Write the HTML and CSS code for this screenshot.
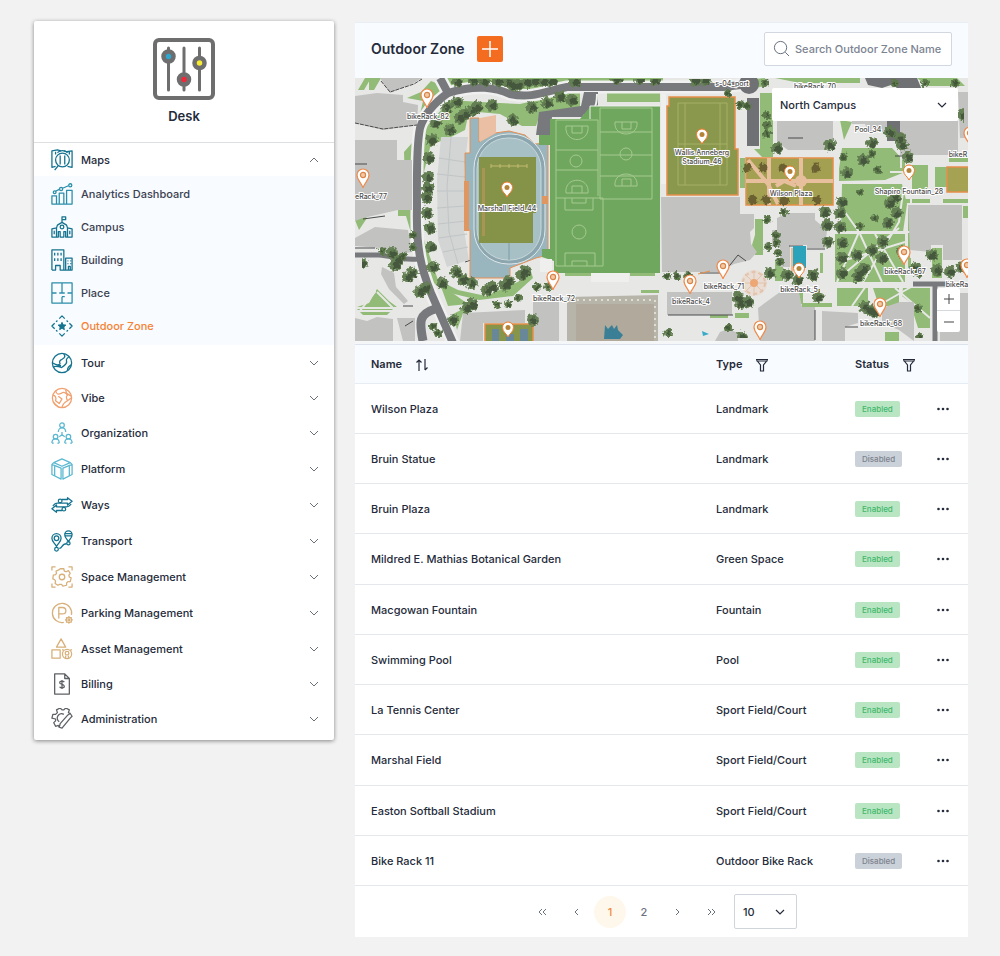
FILE: index.html
```html
<!DOCTYPE html>
<html lang="en">
<head>
    <meta charset="UTF-8">
    <meta name="viewport" content="width=device-width, initial-scale=1.0">
    <title>Desk - Outdoor Zone</title>
    <link rel="stylesheet" href="styles.css">
</head>
<body>
    <!-- Shared symbols -->
    <svg class="symbols" aria-hidden="true">
        <symbol id="down" viewBox="0 0 10 10"><path d="M1 3l4 4 4-4"/></symbol>
        <symbol id="filter" viewBox="0 0 14 14"><path d="M1 1.500h12M1.500 2l4 5v6h3V7l4-5M1.500 3h11"/></symbol>
        <symbol id="dots" viewBox="0 0 14 4"><circle cx="2.500" cy="2" r="1.300"/><circle cx="7" cy="2" r="1.300"/><circle cx="11.500" cy="2" r="1.300"/></symbol>
        <symbol id="pin" viewBox="0 0 14 22" overflow="visible">
            <path d="M7 20C6 15 1 12.500 1 7a6 6 0 0 1 12 0c0 5.500-5 8-6 13z" fill="#fff" stroke="#ef8a4c" stroke-width="1.200"/>
            <circle cx="7" cy="7" r="2.600" fill="#f3c9a5" stroke="#d98448" stroke-width="1.200"/>
        </symbol>
        <symbol id="zone-pin" viewBox="0 0 14 22" overflow="visible">
            <path d="M7 16C6 13 1.500 11 1.500 6.500a5.500 5.500 0 0 1 11 0C12.500 11 8 13 7 16z" fill="#fff" stroke="#ef7a2c" stroke-width="1"/>
            <circle cx="7" cy="6.500" r="2.500" fill="#b58338"/>
        </symbol>
    </svg>

    <div class="page">
        <!-- Sidebar -->
        <aside class="sidebar">
            <div class="brand">
                <svg class="brand-logo" viewBox="0 0 62 62" fill="none" stroke="#6e6e6e">
                    <rect x="2" y="2" width="58" height="58" rx="4" stroke-width="4"/>
                    <path d="M15.500 10v42M31 10v42M46.500 10v42" stroke-width="3" stroke-linecap="round"/>
                    <g stroke-width="4.500">
                        <circle cx="15.500" cy="18.500" r="5" fill="#2fa7cf"/>
                        <circle cx="31" cy="41.500" r="5" fill="#ee2a3a"/>
                        <circle cx="46.500" cy="25" r="5" fill="#f7ec31"/>
                    </g>
                </svg>
                <h1>Desk</h1>
            </div>

            <nav class="menu">
                <button type="button" class="menu-item menu-open">
                    <svg class="icon teal" viewBox="0 0 24 24"><path d="M5 19l-4 1V2l6-1 4 1M14 2l3 1 6-1v18l-5-1M5 3v3M20 3v3"/><circle cx="12.500" cy="12" r="7.500"/><path d="M8 18l-4 5M10 7v10M15 7v10M7 4c3-3 8-3 11 0"/></svg>
                    <span>Maps</span>
                    <svg class="chevron up"><use href="#down"/></svg>
                </button>
                <div class="submenu">
                    <a href="#" class="menu-item">
                        <svg class="icon teal2" viewBox="0 0 24 24"><path d="M1 14h5v9H1zM9 11h5v12H9zM17 8h6v15h-6zM5 9l4-2M12 6l7-3M1 23h22"/><circle cx="4" cy="10" r="1.500"/><circle cx="11" cy="6.500" r="1.700"/><circle cx="21" cy="2.500" r="1.700"/></svg>
                        <span>Analytics Dashboard</span>
                    </a>
                    <a href="#" class="menu-item">
                        <svg class="icon teal" viewBox="0 0 24 24"><path d="M12 7V1h4v3h-4M1 14l5-1 1-3 5-3 5 3 1 3 5 1v9h-7v-6h-2v6h-4v-6H8v6H1zM6 13v10M18 13v10M3.500 16v4M20.500 16v4"/><circle cx="12" cy="12" r="2"/></svg>
                        <span>Campus</span>
                    </a>
                    <a href="#" class="menu-item">
                        <svg class="icon teal" viewBox="0 0 24 24"><path d="M1 23V1h13v22M1 23h4v-5h5v5h13V10h-7v13M4 4v3M7.500 4v3M11 4v3M4 10v3M7.500 10v3M11 10v3M18 13h1M21 13h1M18 16h1M21 16h1M19 23v-4h2v4"/></svg>
                        <span>Building</span>
                    </a>
                    <a href="#" class="menu-item">
                        <svg class="icon teal2" viewBox="0 0 24 24"><path d="M1 1h22v22H1zM1 12h5M9 12h6M18 12h5M12 1v11M12 16v7M12 16h3"/></svg>
                        <span>Place</span>
                    </a>
                    <a href="#" class="menu-item active">
                        <svg class="icon teal" viewBox="0 0 24 24"><path d="M9 4l3-3 3 3M9 20l3 3 3-3M4 9l-3 3 3 3M20 9l3 3-3 3M5.500 7.500l1.500-1.500M17 6l1.500 1.500M5.500 16.500L7 18M17 18l1.500-1.500"/><path fill="#14738f" stroke-width="1" d="M12 8l1.200 2.700 3 .3-2.200 2 .6 3-2.600-1.500L9.400 16l.6-3-2.200-2 3-.3z"/></svg>
                        <span>Outdoor Zone</span>
                    </a>
                </div>
                <button type="button" class="menu-item">
                    <svg class="icon teal" viewBox="0 0 24 24"><circle cx="12" cy="12" r="10.500"/><path d="M14 2c2 3 1 4-2 6-3 1-3 3-2 5-2 2-5 1-8-1M3 16c3-1 6 0 9 1M20 5c-3 2-4 3-3 5 1 4-4 5-5 7M18 20c0-3 2-5 4-6M6 14l5 1"/></svg>
                    <span>Tour</span>
                    <svg class="chevron"><use href="#down"/></svg>
                </button>
                <button type="button" class="menu-item compact">
                    <svg class="icon orange" viewBox="0 0 24 24"><circle cx="12" cy="12" r="10.500"/><path d="M5 4c1 5 4 4 6 3 3-2 5-1 7 2-2 1-1 4 0 6-2 1-5 3-6 7M2 9c3 0 4 3 3 6l4 3 3-5-4-3M16 3l1 4 5 3M3 17l5 5M18 15l4-3"/></svg>
                    <span>Vibe</span>
                    <svg class="chevron"><use href="#down"/></svg>
                </button>
                <button type="button" class="menu-item">
                    <svg class="icon sky" viewBox="0 0 24 24"><circle cx="12" cy="3.500" r="2.500"/><circle cx="5" cy="16" r="2.500"/><circle cx="19" cy="16" r="2.500"/><path d="M8 11c0-6 8-6 8 0M1 23c0-6 8-6 8 0M15 23c0-6 8-6 8 0M12 11v3M12 14l-3 2M12 14l3 2M1 23h2M7 23h2M15 23h2M21 23h2"/></svg>
                    <span>Organization</span>
                    <svg class="chevron"><use href="#down"/></svg>
                </button>
                <button type="button" class="menu-item">
                    <svg class="icon sky" viewBox="0 0 24 24"><path d="M12 1l9 4-9 4-9-4zM1 7l10 4v12L1 18zM23 7l-10 4v12l10-5zM1 7l2-2M23 7l-2-2M4 9v10M20 9v10"/></svg>
                    <span>Platform</span>
                    <svg class="chevron"><use href="#down"/></svg>
                </button>
                <button type="button" class="menu-item">
                    <svg class="icon teal" viewBox="0 0 24 24"><circle cx="10" cy="7.500" r="2"/><circle cx="14" cy="16.500" r="2"/><path d="M12 6h6V4l5 4-5 4v-2H7c-3 0-4 2-5 3M12 18H6v2l-5-4 5-4v2h11c3 0 4-2 5-3"/></svg>
                    <span>Ways</span>
                    <svg class="chevron"><use href="#down"/></svg>
                </button>
                <button type="button" class="menu-item">
                    <svg class="icon teal" viewBox="0 0 24 24"><path d="M6 18c-2-4-5-5-5-9a5 5 0 0 1 10 0c0 4-3 5-5 9zM19 13c-1-3-4-4-4-8a4 4 0 0 1 8 0c0 4-3 5-4 8z"/><circle cx="6" cy="9" r="2.500"/><circle cx="6" cy="21" r="2"/><circle cx="19" cy="14.500" r="1.800"/><path d="M15 4h8M15 6.500h8M9 20c4 0 2-5 8-5"/></svg>
                    <span>Transport</span>
                    <svg class="chevron"><use href="#down"/></svg>
                </button>
                <button type="button" class="menu-item">
                    <svg class="icon tan" viewBox="0 0 24 24"><path d="M1 5V1h4M19 1h4v4M23 19v4h-4M5 23H1v-4M10 3h4l.5 2.500 2 .8L19 5l2 3-1.500 2 .5 2 2 1-1 4-2.500 0-1.500 1.500V21l-4 1-1.500-2-2 0L7.500 21 4.500 19 5 16.500 4 15l-2-1 .5-4L5 9.500 6 8l-.5-2.500L9 4z"/><circle cx="12" cy="12" r="3"/></svg>
                    <span>Space Management</span>
                    <svg class="chevron"><use href="#down"/></svg>
                </button>
                <button type="button" class="menu-item">
                    <svg class="icon tan" viewBox="0 0 24 24"><path d="M14 22.300A10.500 10.500 0 1 1 22.300 14M8.500 18V6h4c5 0 5 7 0 7h-4"/><circle cx="19.500" cy="19.500" r="1"/><path d="M19.500 16l1 1.200 1.600-.2v1.700l1 .8-1 1 0 1.500h-1.600l-1 1-1-1h-1.600l0-1.500-1-1 1-.8V17l1.600.2z"/></svg>
                    <span>Parking Management</span>
                    <svg class="chevron"><use href="#down"/></svg>
                </button>
                <button type="button" class="menu-item">
                    <svg class="icon tan" viewBox="0 0 24 24"><path d="M11 1l5 9H6zM1 13h9v9H1z"/><circle cx="17.500" cy="17.500" r="5"/><circle cx="17.500" cy="16.500" r="2"/><path d="M16 22v-3M19 22v-3M12 13h2M21 13h2"/></svg>
                    <span>Asset Management</span>
                    <svg class="chevron"><use href="#down"/></svg>
                </button>
                <button type="button" class="menu-item compact">
                    <svg class="icon gray" viewBox="0 0 24 24"><path d="M4 1h11l5 5v17H4zM15 1v5h5M14.500 10c-1-1.500-5-1.500-5 .5s5 1.500 5 4-4.500 2-5 .5M12 7.500v10"/></svg>
                    <span>Billing</span>
                    <svg class="chevron"><use href="#down"/></svg>
                </button>
                <button type="button" class="menu-item">
                    <svg class="icon gray" viewBox="0 0 24 24"><path d="M9 21l-1-2-3 1-2-4 2-2v-2l-4-1 1-4h3l2-2-1-3 4-2 2 2h2l2-2 4 2-1 3 2 1"/><path d="M12 22l9-11 2-2-2-3-3 2-8 9-1 4zM14 7a4.500 4.500 0 1 0-5 8"/></svg>
                    <span>Administration</span>
                    <svg class="chevron"><use href="#down"/></svg>
                </button>
            </nav>
        </aside>

        <!-- Main panel -->
        <main class="panel">
            <header class="panel-header">
                <h2>Outdoor Zone</h2>
                <button type="button" class="add-button" aria-label="Add zone">
                    <svg viewBox="0 0 26 26"><path d="M13 5v16M5 13h16"/></svg>
                </button>
                <label class="search">
                    <svg viewBox="0 0 18 18"><circle cx="8" cy="8" r="6.500"/><path d="M13 13l4 4"/></svg>
                    <input type="text" placeholder="Search Outdoor Zone Name" aria-label="Search Outdoor Zone Name">
                </label>
            </header>

            <div class="map">
                <svg class="map-canvas" viewBox="0 0 613 263" preserveAspectRatio="xMidYMid slice">
                    <defs>
                        <filter id="leaf" x="0" y="0" width="100%" height="100%">
                            <feTurbulence type="fractalNoise" baseFrequency="0.3" numOctaves="2" seed="4"/>
                            <feDisplacementMap in="SourceGraphic" scale="6" xChannelSelector="R" yChannelSelector="G"/>
                        </filter>
                        <path id="trees" d="M103 3h0M118 2h0M129 3h0M143 3h0M153 4h0M163 7h0M172 4h0M180 3h0M189 3h0M197 3h0M220 3h0M262 1h0M285 1h0M300 2h0M340 2h0M350 2h0M102 24h0M118 32h0M122 29h0M137 27h0M158 7h0M158 42h0M177 29h0M192 25h0M205 19h0M217 22h0M105 40h0M110 36h0M95 52h0M92 29h0M81 45h0M77 62h0M74 80h0M73 99h0M73 110h0M72 119h0M72 135h0M75 150h0M76 169h0M78 189h0M87 205h0M101 194h0M108 202h0M117 205h0M132 212h0M137 209h0M150 207h0M154 203h0M167 197h0M170 193h0M40 187h0M43 182h0M53 199h0M57 195h0M65 214h0M70 210h0M7 185h0M37 175h0M112 230h0M117 226h0M98 242h0M178 242h0M535 125h0M540 120h0M542 135h0M533 145h0M485 135h0M487 124h0M485 149h0M472 147h0M470 134h0M487 165h0M473 164h0M487 180h0M502 177h0M517 172h0M528 164h0M505 195h0M509 191h0M503 199h0M487 195h0M527 180h0M547 174h0M560 190h0M563 194h0M577 177h0M582 192h0M595 194h0M607 189h0M432 197h0M458 197h0M443 202h0M463 219h0M415 195h0M383 219h0M385 225h0M393 224h0M387 259h0M515 232h0M510 229h0M520 234h0M422 70h0M475 67h0M517 65h0M535 54h0M545 60h0M553 79h0M547 67h0M492 95h0M508 82h0M608 37h0"/>
                        <path id="small-trees" d="M27 173h0M58 157h0M58 169h0M48 178h0M142 227h0M153 226h0M163 220h0M182 209h0M193 209h0M412 37h0M412 47h0M412 56h0M410 5h0M385 27h0M373 15h0M429 134h0M412 142h0M421 157h0M421 165h0M413 169h0M373 250h0M312 198h0M322 198h0M333 198h0M313 255h0M505 148h0M523 92h0M517 76h0M520 140h0M565 259h0M83 255h0M78 248h0M563 230h0M505 114h0M488 79h0M540 5h0M570 5h0M600 5h0M392 28h0M423 175h0M425 184h0"/>
                    </defs>

                    <rect width="613" height="263" fill="#e7e8e6"/>

                    <!-- Lawns -->
                    <g fill="#91bb76">
                        <path d="M3 12l7-12h6l-7 12zM14 0h12l-7 12h-5zM76 3l10 4-2 14-20 20 4-18-16-3 14-6z"/>
                        <path d="M88 0h220v5L235 5l-40 10-33-2-30-8-40 5zM95 22l30 2 40 2 60-14v18l-40 6-4 12-14 0-22-12-22-2-10 4-3 14-20 10-14 4-10 40 1 50 16 46 20 10 28 6 36-16 8-12 3 10-20 18-34 4-33-8-22-16-18-60-2-64z"/>
                        <path d="M0 142l8-6 4 4-8 12zM43 128h12v10H43zM14 225l8-14 12 12 8 6H2zM85 206l28 20-20 2zM98 236l12-6-8 22zM2 231h36l-6 6H8z"/>
                        <path d="M252 15h53v9h-53zM210 195h30v3h-30zM286 212h18v3h-18zM275 195h25v3h-25z"/>
                        <path d="M368 20h12v60h-7v-20zM405 15h13v64h-11l-8-8h6zM385 80h5v30h-5zM400 141h8v36h-8l-3-10 3-10zM355 236h18v4h-18zM380 235h14v5h-14zM385 3l25-3v8l-15 3zM420 0h85v5h-60z"/>
                        <path d="M487 70h50l13 14v10l-20 8-46 1v-12zM487 106h60l5 20-4 28h-62zM480 156h70v48h-70zM482 210h32v18h-32zM518 210h26v18h-20zM548 210h27v40h-12l-8-26-8-6zM447 225h30v4h-30zM440 212h8v14h-8z"/>
                        <path d="M557 87h16v28h-16zM580 89h12v20h-12zM550 121h25v4h-25zM588 121h25v4h-25zM594 80h19v4h-19zM553 130h3v60h-3zM577 170h10v30h-10zM608 128h5v12h-5zM530 254h14v9h-14zM465 175h3v20h-3zM420 183h8v20h-8zM562 0h40l8 8h-38zM485 42l12 2-8 18z"/>
                    </g>

                    <!-- Footpaths -->
                    <g fill="none" stroke="#e7e8e6" stroke-width="2">
                        <path d="M480 154h76M552 84l-8 60-36 60M487 130l17 24-22 50M505 156l22 48M520 156l28 48M484 184l66-20M484 200l60-50M514 205v25M497 228l14-20M528 225l28-16M556 90v90M546 70v20M535 94h24M540 210l35 30M20 180v34l-16 20M22 214l20 20M0 233h60"/>
                    </g>

                    <!-- Roads -->
                    <g fill="none" stroke="#eff0ef" stroke-width="13">
                        <path d="M85 0l8 15c-14 10-24 22-28 35-4 20-3 50-3 80-1 40 4 60 14 85l22 50"/>
                        <path d="M93 15c30-9 48-5 62 1 22 5 36-3 57-7h156l27-3"/>
                    </g>
                    <path d="M184 34l28-4 14-2 3-14h14v13l-8 12h-38l-2 18h-14z" fill="#78797c"/>
                    <path d="M228 38c10-2 14-8 14-22" fill="none" stroke="#eff0ef" stroke-width="2"/>
                    <g fill="none" stroke="#78797c" stroke-width="8">
                        <path d="M85 0l8 15c-14 10-24 22-28 35-4 20-3 50-3 80-1 40 4 60 14 85l22 50"/>
                        <path d="M93 15c30-9 48-5 62 1 22 5 36-3 57-7h156l27-3"/>
                        <path d="M0 177h24c14 1 22 6 40 4" stroke-width="5"/>
                        <path d="M68 263c-4-20-4-27 12-32" stroke-width="9"/>
                        <path d="M558 206h36M580 206v57" stroke-width="5"/>
                    </g>
                    <g fill="#707174">
                        <circle cx="394" cy="6" r="10"/>
                        <path d="M392 20h12v48h-12zM510 0h52l5 12h-24l-4-6-12 4-14-3zM532 43h13v20h-13z"/>
                    </g>

                    <!-- Buildings -->
                    <g fill="#c2c2c1">
                        <path d="M25 0h42l-10 6-22 9zM0 18l22-3 26 2v7l15 3-1 20-34 5-28-7zM0 62h42v20h15v50H43l-35 8-8 3zM0 160l20-11 33 3 4 22-12 2-20-6-25-2zM0 240l12 3 10-4 16 2v22H0zM27 189l12 6 2 14 12 14-4 3-15-15-8-15z"/>
                        <path d="M108 235l62-3v13h-42v18h-23zM178 224h26v39h-26zM42 240h18v23H48zM306 119h79v17h14v14l-4 4 1 12 6 8-7 8-16 4-14 8h-58z"/>
                        <path d="M422 140l11-5h27v7l12 10-2 18h-18v-3h-17v22h-10v-20h-8v-17h5zM553 127h54v55h-19v-15h-12v7l-21-2zM312 214h65v23h-65zM365 254l8-3 10 4v8h-23zM403 230l22-16h19l3 15h13v34h-55zM467 233l36 2v10l-13 4v14h-23zM527 230l18-6h14v39l-15-11-17-7zM588 215h25v48h-28v-40z"/>
                        <path d="M422 42h56v30h-45l-11-8zM545 43h58v34h-58zM603 14h10v46h-8zM497 42h35v12h-18l-4-8h-13z"/>
                    </g>
                    <g fill="none" stroke="#4a4b4c" stroke-width="1">
                        <path d="M26 3l9 11 24-8 8-5M0 45l28 6 34-4" stroke-dasharray="4 1"/>
                        <path d="M0 86h12M8 141l22-3M0 170h20M48 228h10M110 184l12-4M50 248l8-5M313 237h65M345 195h20l10-8 8-10 8 6M434 168h14M452 171h18M433 60h15M540 78h12M460 232v30M490 249h13"/>
                    </g>

                    <!-- West stands -->
                    <path d="M86 59h27l-4 35v58l5 30-22 7-9-27-1-60z" fill="#d3d5d5"/>
                    <path d="M96 59l-4 50 2 45 9 32M84 80l26 4M82 96l28 3M82 113h28M82 130l28-2M83 146l28-3M84 160l28-4M88 174l25-5" fill="none" stroke="#c2c5c5"/>

                    <!-- Track -->
                    <path d="M115 40h9v24l16-9 14-2 16 4 10 9 13-1v112l-12 3-26 10v10h-40V152h-5V75h5z" fill="#99b5bd" stroke="#e69055"/>
                    <path d="M125 40l16-3v18l-16 9z" fill="#eabfa3"/>
                    <rect x="119" y="56" width="71" height="130" rx="34" fill="#8ba6ae" stroke="#dfe8ea" stroke-width="1"/>
                    <rect x="122" y="60" width="64" height="122" rx="31" fill="#a6c0c5" stroke="#c8d7da"/>
                    <path d="M124 79h57v56h-3v30h-54z" fill="#849347"/>
                    <path d="M136 88h36M136 86v4M145 86v4M154 86v4M163 86v4M172 86v4" stroke="#c3ba72" fill="none"/>
                    <path d="M154 165v17" stroke="#7f9aa3" fill="none"/>
                    <path d="M109 103h5v50h-5zM187 118h6v8h-6z" fill="#df9660"/>
                    <path d="M127 90h3v68h-3z" fill="#a89457"/>

                    <!-- Playing fields -->
                    <path d="M195 41h30l10-12v-1h70v167H199v-12l-12-4v-8h8z" fill="#70a75f"/>
                    <path d="M235 41V28h70" fill="none" stroke="#eff0ee" stroke-width="1"/>
                    <path d="M184 57h11v10h-11z" fill="#70a75f"/>
                    <g fill="none" stroke="#a5c98f" stroke-width="1">
                        <path d="M201 42h42v76M245 30h52v91h-52zM201 72h42M201 92h42M245 77h52M201 42v146M201 120h47v68h-47M210 120v12h28v-12M217 120v5h14v-5M210 188v-13h30v13M217 188v-5h15v5M245 54h52M245 98h52"/>
                        <circle cx="221" cy="83" r="6"/><circle cx="271" cy="76" r="6"/><circle cx="224" cy="154" r="7"/>
                        <path d="M211 48h22c2 18-24 18-22 0zM260 44h22c2 16-24 16-22 0zM211 115h22c2-17-24-17-22 0zM260 108h22c2-16-24-16-22 0zM217 48v7h10v-7M267 44v7h9v-7M217 115v-7h10v7M267 108v-7h9v7"/>
                    </g>
                    <path d="M306 16h5v90h-5zM236 195h38v9h-38zM185 181h12v13h-12z" fill="#eff0ee"/>

                    <!-- Highlighted zones -->
                    <g stroke="#e68f49" stroke-width="1.500">
                        <path d="M314 19h66v52h3v46h-71V28h2z" fill="#8a984d"/>
                        <rect x="391" y="80" width="87" height="47" fill="#a3a052"/>
                        <rect x="592" y="89" width="25" height="25" fill="#a5a253"/>
                        <rect x="130" y="246" width="48" height="20" fill="#87954a"/>
                    </g>
                    <path d="M323 25h49v82h-49zM323 66h49M330 25v82M365 25v82" fill="none" stroke="#a6af69"/>
                    <path d="M391 103h87M414 80v47M446 80v47M393 82l20 24 10 20M421 108l8-5 12 5" fill="none" stroke="#e8bf9d" stroke-width="4"/>
                    <circle cx="446" cy="103" r="6" fill="#e8bf9d"/>
                    <g fill="#68889a"><path d="M137 251h7v12h-7zM151 256h8v7h-8zM165 251h8v12h-8z"/></g>

                    <!-- Recreation hall -->
                    <path d="M212 219l91-2v46h-91z" fill="#b7b4aa"/>
                    <path d="M221 226h78v37h-78z" fill="#b1aa9c"/>
                    <path d="M216 222h84v41" fill="none" stroke="#e0ddd5" stroke-width="2" stroke-dasharray="2 4"/>
                    <path d="M249 261l1-14 3 4 4-4 2 4 3-4 1 5 5 5-3 4z" fill="#3b7f96"/>

                    <!-- Pool and fountain plaza -->
                    <rect x="438" y="168" width="13" height="22" fill="#2ca3bb"/>
                    <path d="M437 170v24M343 196l12-3" stroke="#e68f49"/>
                    <path d="M347 253l7 3-6 2z" fill="#38abc9"/>
                    <circle cx="399" cy="205" r="13" fill="#e9ddd4"/>
                    <circle cx="399" cy="205" r="11" fill="none" stroke="#e3c3ab" stroke-width="2" stroke-dasharray="4 3"/>
                    <path d="M399 192v26M386 205h26M390 196l18 18M408 196l-18 18" stroke="#e3c3ab"/>
                    <circle cx="399" cy="205" r="4" fill="#eda775"/>

                    <!-- Trees -->
                    <g filter="url(#leaf)" fill="none" stroke-linecap="round">
                        <use href="#trees" stroke="#647f52" stroke-width="12"/>
                        <use href="#small-trees" stroke="#5b784b" stroke-width="8"/>
                        <use href="#trees" stroke="#45593e" stroke-width="7" transform="translate(1 1)"/>
                        <use href="#small-trees" stroke="#425739" stroke-width="4"/>
                        <path d="M392 90h0M408 90h0M428 90h0M461 90h0M398 122h0M411 122h0M429 123h0M462 122h0" stroke="#6b6132" stroke-width="9"/>
                    </g>

                    <!-- Pins -->
                    <g>
                        <use href="#pin" x="65" y="10" width="14" height="22"/>
                        <use href="#pin" x="1" y="90" width="14" height="22"/>
                        <use href="#zone-pin" x="145" y="103" width="14" height="22"/>
                        <use href="#pin" x="191" y="192" width="14" height="22"/>
                        <use href="#zone-pin" x="146" y="243" width="14" height="22"/>
                        <use href="#zone-pin" x="340" y="50" width="14" height="22"/>
                        <use href="#zone-pin" x="428" y="87" width="14" height="22"/>
                        <use href="#zone-pin" x="547" y="86" width="14" height="22"/>
                        <use href="#pin" x="328" y="196" width="14" height="22"/>
                        <use href="#pin" x="361" y="181" width="14" height="22"/>
                        <use href="#zone-pin" x="437" y="184" width="14" height="22"/>
                        <use href="#pin" x="542" y="167" width="14" height="22"/>
                        <use href="#pin" x="518" y="219" width="14" height="22"/>
                        <use href="#pin" x="398" y="242" width="14" height="22"/>
                        <use href="#pin" x="605" y="180" width="14" height="22"/>
                        <use href="#pin" x="608" y="48" width="14" height="22"/>
                    </g>

                    <!-- Place names -->
                    <g class="map-labels">
                        <text x="377" y="8">s-04_port</text>
                        <text x="460" y="11">bikeRack_70</text>
                        <text x="73" y="41">bikeRack_82</text>
                        <text x="16" y="121">eRack_77</text>
                        <text x="152" y="133">Marshall Field_44</text>
                        <text x="347" y="77">Wallis Anneberg</text>
                        <text x="347" y="86">Stadium_46</text>
                        <text x="436" y="118">Wilson Plaza</text>
                        <text x="513" y="54">Pool_34</text>
                        <text x="603" y="79">bikeR</text>
                        <text x="554" y="116">Shapiro Fountain_28</text>
                        <text x="199" y="223">bikeRack_72</text>
                        <text x="336" y="226">bikeRack_4</text>
                        <text x="369" y="211">bikeRack_71</text>
                        <text x="444" y="214">bikeRack_5</text>
                        <text x="550" y="196">bikeRack_67</text>
                        <text x="526" y="248">bikeRack_68</text>
                        <text x="602" y="209">bikeRa</text>
                    </g>
                </svg>

                <div class="campus-select">
                    <select aria-label="Campus">
                        <option>North Campus</option>
                        <option>South Campus</option>
                    </select>
                    <svg class="chevron"><use href="#down"/></svg>
                </div>

                <div class="map-zoom">
                    <button type="button" aria-label="Zoom in"><svg viewBox="0 0 12 12"><path d="M6 1v10M1 6h10"/></svg></button>
                    <button type="button" aria-label="Zoom out"><svg viewBox="0 0 12 12"><path d="M1 6h10"/></svg></button>
                </div>
            </div>

            <table class="zones">
                <thead>
                    <tr>
                        <th class="col-name">Name <button type="button" aria-label="Sort by name"><svg viewBox="0 0 14 14"><path d="M4 13V2M1.500 4.500L4 2l2.500 2.500M10 1v11M10 12l2.500-2.500"/></svg></button></th>
                        <th class="col-type">Type <button type="button" aria-label="Filter by type"><svg><use href="#filter"/></svg></button></th>
                        <th class="col-status">Status <button type="button" aria-label="Filter by status"><svg><use href="#filter"/></svg></button></th>
                        <th class="col-actions"></th>
                    </tr>
                </thead>
                <tbody>
                    <tr>
                        <td>Wilson Plaza</td>
                        <td>Landmark</td>
                        <td><span class="badge enabled">Enabled</span></td>
                        <td><button type="button" aria-label="Actions"><svg><use href="#dots"/></svg></button></td>
                    </tr>
                    <tr>
                        <td>Bruin Statue</td>
                        <td>Landmark</td>
                        <td><span class="badge disabled">Disabled</span></td>
                        <td><button type="button" aria-label="Actions"><svg><use href="#dots"/></svg></button></td>
                    </tr>
                    <tr>
                        <td>Bruin Plaza</td>
                        <td>Landmark</td>
                        <td><span class="badge enabled">Enabled</span></td>
                        <td><button type="button" aria-label="Actions"><svg><use href="#dots"/></svg></button></td>
                    </tr>
                    <tr>
                        <td>Mildred E. Mathias Botanical Garden</td>
                        <td>Green Space</td>
                        <td><span class="badge enabled">Enabled</span></td>
                        <td><button type="button" aria-label="Actions"><svg><use href="#dots"/></svg></button></td>
                    </tr>
                    <tr>
                        <td>Macgowan Fountain</td>
                        <td>Fountain</td>
                        <td><span class="badge enabled">Enabled</span></td>
                        <td><button type="button" aria-label="Actions"><svg><use href="#dots"/></svg></button></td>
                    </tr>
                    <tr>
                        <td>Swimming Pool</td>
                        <td>Pool</td>
                        <td><span class="badge enabled">Enabled</span></td>
                        <td><button type="button" aria-label="Actions"><svg><use href="#dots"/></svg></button></td>
                    </tr>
                    <tr>
                        <td>La Tennis Center</td>
                        <td>Sport Field/Court</td>
                        <td><span class="badge enabled">Enabled</span></td>
                        <td><button type="button" aria-label="Actions"><svg><use href="#dots"/></svg></button></td>
                    </tr>
                    <tr>
                        <td>Marshal Field</td>
                        <td>Sport Field/Court</td>
                        <td><span class="badge enabled">Enabled</span></td>
                        <td><button type="button" aria-label="Actions"><svg><use href="#dots"/></svg></button></td>
                    </tr>
                    <tr>
                        <td>Easton Softball Stadium</td>
                        <td>Sport Field/Court</td>
                        <td><span class="badge enabled">Enabled</span></td>
                        <td><button type="button" aria-label="Actions"><svg><use href="#dots"/></svg></button></td>
                    </tr>
                    <tr>
                        <td>Bike Rack 11</td>
                        <td>Outdoor Bike Rack</td>
                        <td><span class="badge disabled">Disabled</span></td>
                        <td><button type="button" aria-label="Actions"><svg><use href="#dots"/></svg></button></td>
                    </tr>
                </tbody>
            </table>

            <!-- Pagination -->
            <footer class="pagination">
                <button type="button" aria-label="First page"><svg viewBox="0 0 10 10"><path d="M5 2L2 5l3 3M9 2L6 5l3 3"/></svg></button>
                <button type="button" aria-label="Previous page"><svg viewBox="0 0 10 10"><path d="M7 2L4 5l3 3"/></svg></button>
                <button type="button" class="current">1</button>
                <button type="button">2</button>
                <button type="button" aria-label="Next page"><svg viewBox="0 0 10 10"><path d="M3 2l3 3-3 3"/></svg></button>
                <button type="button" aria-label="Last page"><svg viewBox="0 0 10 10"><path d="M1 2l3 3-3 3M5 2l3 3-3 3"/></svg></button>
                <div class="page-size">
                    <select aria-label="Rows per page">
                        <option>10</option>
                        <option>20</option>
                    </select>
                    <svg class="chevron"><use href="#down"/></svg>
                </div>
            </footer>
        </main>
    </div>
</body>
</html>
```
FILE: styles.css
```css
* {
    box-sizing: border-box;
}

body {
    margin: 0;
    background-color: #f2f2f2;
    color: #252b3a;
    font-family: Inter, sans-serif;
    font-size: 11px;
    font-weight: 500;
}

button,
select,
input {
    font: inherit;
    color: inherit;
    margin: 0;
    padding: 0;
    border: none;
    background: none;
}

button {
    cursor: pointer;
}

svg {
    display: block;
    flex-shrink: 0;
}

.symbols {
    position: absolute;
    width: 0;
    height: 0;
}

.page {
    display: flex;
    align-items: flex-start;
    gap: 21px;
    padding: 21px 32px 19px 34px;
}

/* Sidebar */
.sidebar {
    width: 300px;
    flex-shrink: 0;
    padding-bottom: 3px;
    background-color: #fff;
    border-radius: 2px;
    box-shadow: 0 1px 4px rgba(0, 0, 0, 0.45);
}

.brand {
    display: flex;
    flex-direction: column;
    align-items: center;
    gap: 8px;
    height: 122px;
    padding-top: 17px;
    border-bottom: 1px solid #dedfe1;
}

.brand-logo {
    width: 62px;
    height: 62px;
}

.brand h1 {
    margin: 0;
    font-size: 13px;
    line-height: 16px;
    font-weight: 600;
}

.menu-item {
    display: flex;
    align-items: center;
    gap: 8px;
    width: 100%;
    height: 36px;
    padding: 0 15px 0 17px;
    color: inherit;
    text-align: left;
    text-decoration: none;
}

.menu-item.compact {
    height: 34px;
}

.menu-item.menu-open,
.submenu .menu-item {
    height: 33px;
}

.submenu {
    padding: 1px 0 3px;
    background-color: #f8fbff;
}

.submenu .menu-item {
    color: #3a4150;
}

.submenu .menu-item.active {
    color: #f58232;
}

.icon {
    width: 22px;
    height: 22px;
    fill: none;
    stroke-width: 1.4;
    stroke-linejoin: round;
}

.teal { stroke: #14738f; }
.teal2 { stroke: #2b8faa; }
.sky { stroke: #5bb8d0; }
.orange { stroke: #f0a170; }
.tan { stroke: #d8b07a; }
.gray { stroke: #5d6064; }

.chevron {
    width: 10px;
    height: 10px;
    margin-left: auto;
    fill: none;
    stroke: #6a6f78;
    stroke-width: 1;
}

.chevron.up {
    transform: rotate(180deg);
}

/* Main panel */
.panel {
    flex: 1;
    min-width: 0;
    margin-top: 1px;
    background-color: #fff;
}

.panel-header {
    display: flex;
    align-items: center;
    gap: 12px;
    height: 56px;
    padding: 0 16px 4px;
    background-color: #f8fbff;
    border-top: 1px solid #e8eef5;
}

.panel-header h2 {
    margin: 0;
    font-size: 14px;
    font-weight: 600;
}

.add-button {
    width: 26px;
    height: 26px;
    border-radius: 2px;
    background-color: #f46c20;
}

.add-button svg {
    fill: none;
    stroke: #fff;
    stroke-width: 1.5;
}

.search {
    display: flex;
    align-items: center;
    gap: 5px;
    width: 188px;
    height: 34px;
    margin-left: auto;
    padding: 0 8px;
    background-color: #fff;
    border: 1px solid #d3d8e0;
    border-radius: 2px;
}

.search svg {
    width: 17px;
    height: 17px;
    fill: none;
    stroke: #5f6878;
}

.search input {
    flex: 1;
    min-width: 0;
    outline: none;
}

.search input::placeholder {
    color: #7c8492;
    opacity: 1;
}

/* Map */
.map {
    position: relative;
    border-bottom: 1px solid #dce3ed;
    padding-bottom: 3px;
    background-color: #f5f6f8;
}

.map-canvas {
    width: 100%;
    height: 263px;
}

.map-labels {
    font-size: 7px;
    font-weight: 500;
    text-anchor: middle;
    fill: #4c4c4c;
    stroke: #fff;
    stroke-width: 2px;
    paint-order: stroke;
}

.campus-select {
    position: absolute;
    top: 10px;
    right: 10px;
    display: flex;
    align-items: center;
    width: 186px;
    height: 33px;
    background-color: #fff;
    border-radius: 2px;
}

.campus-select select,
.page-size select {
    appearance: none;
    width: 100%;
    height: 100%;
    padding-left: 8px;
    outline: none;
}

.campus-select .chevron,
.page-size .chevron {
    position: absolute;
    right: 11px;
    stroke: #252b3a;
    stroke-width: 1.2;
    pointer-events: none;
}

.map-zoom {
    position: absolute;
    right: 8px;
    bottom: 12px;
    width: 23px;
    background-color: #fff;
    border-radius: 2px;
}

.map-zoom button {
    display: grid;
    place-items: center;
    width: 100%;
    height: 22px;
}

.map-zoom button + button {
    border-top: 1px solid #d5d9de;
}

.map-zoom svg {
    width: 12px;
    height: 12px;
    stroke: #444;
}

/* Table */
.zones {
    width: 100%;
    table-layout: fixed;
    border-spacing: 0;
}

.zones th,
.zones td {
    padding: 0 0 0 16px;
    text-align: left;
    border-bottom: 1px solid #e4e7eb;
}

.zones th {
    height: 39px;
    font-weight: 600;
    background-color: #f8fbff;
    border-bottom-color: #e6ecf3;
}

.zones th button {
    display: inline-block;
    margin-left: 10px;
    vertical-align: middle;
}

.zones th svg {
    width: 14px;
    height: 14px;
    fill: none;
    stroke: #252b3a;
    stroke-width: 1.2;
}

.zones td {
    height: 50px;
}

.zones tr:nth-child(4n) td {
    height: 51px;
}

.col-type { width: 139px; }
.col-status { width: 78px; }
.col-actions { width: 51px; }

.zones td:last-child {
    padding: 0;
}

.zones td button {
    margin: 0 auto;
    display: block;
}

.zones td svg {
    width: 14px;
    height: 4px;
    fill: #252b3a;
}

.badge {
    display: inline-block;
    padding: 0 7px;
    font-size: 8px;
    line-height: 16px;
    border-radius: 2px;
    vertical-align: middle;
}

.enabled {
    color: #41b86b;
    background-color: #b9e5c3;
}

.disabled {
    color: #7b828d;
    background-color: #cbd1d9;
}

/* Pagination */
.pagination {
    display: flex;
    align-items: center;
    justify-content: center;
    gap: 2px;
    height: 51px;
    color: #6b7280;
}

.pagination button {
    display: grid;
    place-items: center;
    width: 32px;
    height: 32px;
    border-radius: 50%;
}

.pagination button svg {
    width: 10px;
    height: 10px;
    fill: none;
    stroke: #6b7280;
}

.pagination .current {
    color: #f08a3c;
    background-color: #fef8ec;
}

.page-size {
    position: relative;
    display: flex;
    align-items: center;
    width: 63px;
    height: 35px;
    margin-left: 4px;
    color: #252b3a;
    border: 1px solid #d0d5dc;
    border-radius: 2px;
}
```
